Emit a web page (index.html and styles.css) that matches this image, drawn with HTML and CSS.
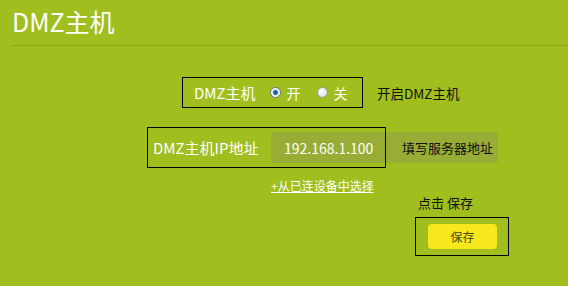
FILE: index.html
```html
<!DOCTYPE html>
<html lang="zh">
<head>
<meta charset="utf-8">
<title>DMZ主机</title>
<link rel="stylesheet" href="styles.css">
</head>
<body>
<div class="page">
  <h1 class="title">DMZ主机</h1>
  <div class="rule"></div>

  <div class="row row-switch">
    <div class="hl group-switch">
      <span class="label">DMZ主机</span>
      <span class="radio checked"></span><span class="radio-text">开</span>
      <span class="radio"></span><span class="radio-text">关</span>
    </div>
    <span class="note note-switch">开启DMZ主机</span>
  </div>

  <div class="row row-ip">
    <div class="hl group-ip">
      <span class="label label-ip">DMZ主机IP地址</span>
      <div class="input">
        <span class="value">192.168.1.100</span>
        <span class="hint">填写服务器地址</span>
      </div>
    </div>
  </div>

  <div class="row row-link">
    <a class="link" href="#">+从已连设备中选择</a>
  </div>

  <div class="row row-tip">
    <span class="note tip">点击 保存</span>
  </div>

  <div class="row row-save">
    <div class="hl group-save">
      <button class="btn-save" type="button">保存</button>
    </div>
  </div>
</div>
</body>
</html>
```

FILE: styles.css
```css
html, body {
  margin: 0;
  padding: 0;
}
body {
  background: #a0be1e;
  font-family: "Noto Sans CJK SC", "Noto Sans", sans-serif;
  color: #ffffff;
  width: 568px;
  height: 286px;
  overflow: hidden;
}
.page {
  display: flex;
  flex-direction: column;
}
.title {
  margin: 0;
  padding: 5px 0 0 12px;
  height: 40px;
  box-sizing: border-box;
  font-size: 25px;
  line-height: 32px;
  font-weight: normal;
  color: #ffffff;
}
.rule {
  margin-left: 11px;
  height: 0;
  border-top: 1px solid #8ca51c;
  margin-top: 5px;
}
.row {
  display: flex;
  align-items: center;
}
.hl {
  position: relative;
  box-sizing: border-box;
}
.hl::after {
  content: "";
  position: absolute;
  inset: 0;
  border: 1px solid #000000;
  pointer-events: none;
}
.label {
  font-size: 15px;
  line-height: 20px;
  color: #ffffff;
}
.row-switch {
  margin-top: 31px;
  margin-left: 182px;
}
.group-switch {
  width: 181px;
  height: 31px;
  display: flex;
  align-items: center;
  padding-left: 12px;
}
.radio {
  width: 11px;
  height: 11px;
  border-radius: 50%;
  box-sizing: border-box;
  border: 1px solid #8e9aa3;
  background: radial-gradient(circle at 40% 35%, #ffffff 0%, #e8e8e8 55%, #c4c4c4 100%);
  margin-left: 11px;
  margin-right: 6px;
  flex-shrink: 0;
}
.radio.checked {
  margin-left: 14px;
  background: radial-gradient(circle, #0b3f70 0%, #2a7fc4 32%, #dfe9f1 48%, #ffffff 68%, #c2ccd4 100%);
  border-color: #65798b;
}
.radio + .radio-text + .radio {
  margin-left: 16px;
}
.radio-text {
  font-size: 14px;
  line-height: 20px;
  color: #ffffff;
}
.note {
  font-size: 13.5px;
  line-height: 20px;
  color: #111111;
}
.note-switch {
  margin-left: 14px;
}
.row-ip {
  margin-top: 19px;
  margin-left: 147px;
}
.group-ip {
  width: 239px;
  height: 41px;
  display: flex;
  align-items: center;
  padding-left: 6px;
}
.label-ip {
  width: 118px;
  flex-shrink: 0;
}
.input {
  flex-shrink: 0;
  width: 227px;
  height: 31px;
  border-radius: 3px;
  background: #98ad36;
  display: flex;
  align-items: center;
  padding-left: 13px;
  box-sizing: border-box;
}
.value {
  font-size: 14px;
  color: #ffffff;
  width: 118px;
}
.hint {
  font-size: 13px;
  color: #111111;
}
.row-link {
  margin-top: 9px;
  margin-left: 271px;
}
.link {
  font-size: 12px;
  line-height: 18px;
  color: #ffffff;
  text-decoration: underline;
}
.row-tip {
  margin-top: -2px;
  margin-left: 418px;
}
.tip {
  font-size: 13px;
}
.row-save {
  margin-top: 4px;
  margin-left: 415px;
}
.group-save {
  width: 94px;
  height: 39px;
  padding: 7px 0 0 13px;
}
.btn-save {
  display: block;
  width: 69px;
  height: 25px;
  border: none;
  border-radius: 4px;
  background: #f6e81c;
  font-family: "Noto Sans CJK SC", sans-serif;
  font-size: 12px;
  color: #4a4a1a;
  padding: 0;
  text-align: center;
}
```
